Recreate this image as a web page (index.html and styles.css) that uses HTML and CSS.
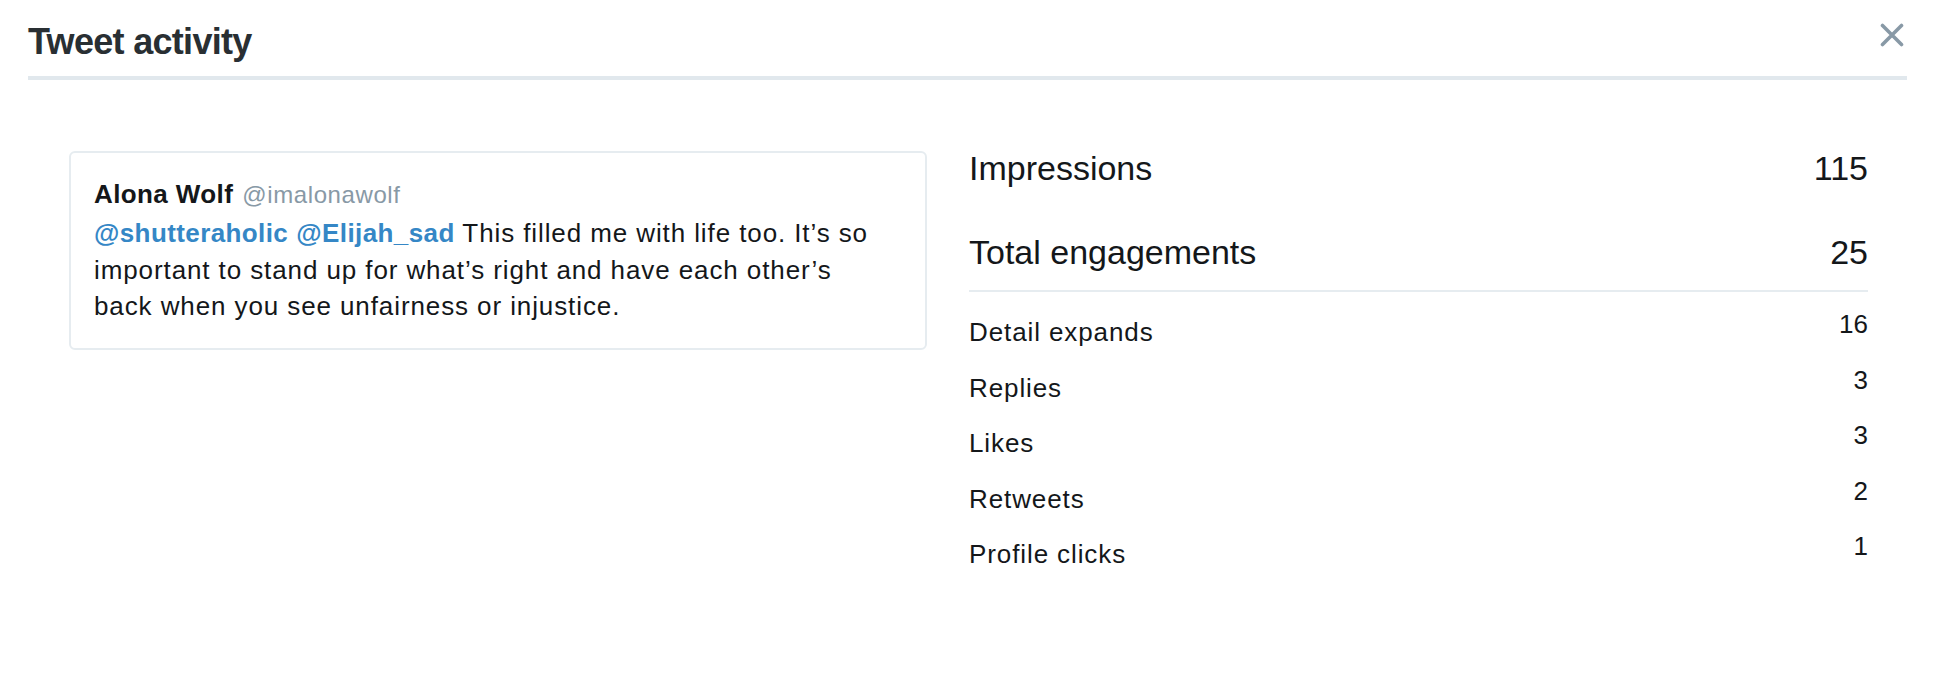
FILE: index.html
```html
<!DOCTYPE html>
<html lang="en">
<head>
<meta charset="utf-8">
<title>Tweet activity</title>
<link rel="stylesheet" href="styles.css">
</head>
<body>
<header class="header">
  <h1 class="title">Tweet activity</h1>
  <button class="close" aria-label="Close">
    <svg width="24" height="24" viewBox="0 0 24 24"><path d="M2.5 2.5 L21.5 21.5 M21.5 2.5 L2.5 21.5" stroke="#8899a6" stroke-width="3.6" stroke-linecap="round" fill="none"/></svg>
  </button>
</header>
<main class="main">
  <article class="card">
    <div class="author"><span class="name">Alona Wolf</span><span class="handle">@imalonawolf</span></div>
    <p class="text"><span class="mention">@shutteraholic</span> <span class="mention">@Elijah_sad</span> This filled me with life too. It’s so important to stand up for what’s right and have each other’s back when you see unfairness or injustice.</p>
  </article>
  <section class="stats">
    <div class="big-row"><span>Impressions</span><span>115</span></div>
    <div class="big-row"><span>Total engagements</span><span>25</span></div>
    <div class="sep"></div>
    <div class="row"><span class="label">Detail expands</span><span class="num">16</span></div>
    <div class="row"><span class="label">Replies</span><span class="num">3</span></div>
    <div class="row"><span class="label">Likes</span><span class="num">3</span></div>
    <div class="row"><span class="label">Retweets</span><span class="num">2</span></div>
    <div class="row"><span class="label">Profile clicks</span><span class="num">1</span></div>
  </section>
</main>
</body>
</html>
```
FILE: styles.css
```css
* { box-sizing: border-box; }
html, body { margin: 0; padding: 0; background: #fff; }
body {
  width: 1933px;
  height: 688px;
  overflow: hidden;
  font-family: "Liberation Sans", Arial, sans-serif;
  color: #14171a;
}
.header {
  display: flex;
  justify-content: space-between;
  align-items: flex-start;
  margin: 0 26px 0 28px;
  padding: 21px 3px 13px 0;
  border-bottom: 4px solid #e1e8ed;
}
.title {
  margin: 0;
  font-size: 36px;
  line-height: 42px;
  font-weight: 700;
  letter-spacing: -0.7px;
  color: #292f33;
}
.close {
  margin: 2px 0 0 0;
  padding: 0;
  border: 0;
  background: none;
  width: 24px;
  height: 24px;
  display: block;
}
.close svg { display: block; }
.main {
  display: flex;
  align-items: flex-start;
  padding: 66px 65px 0 69px;
}
.card {
  width: 858px;
  flex: none;
  margin-top: 5px;
  border: 2px solid #e6ecf0;
  border-radius: 6px;
  padding: 26px 40px 23px 23px;
}
.author {
  display: flex;
  align-items: baseline;
  gap: 9px;
  font-size: 26px;
  line-height: 30px;
  margin-bottom: 6px;
}
.name {
  font-weight: 700;
  letter-spacing: 0.4px;
  color: #14171a;
}
.handle {
  font-size: 24px;
  line-height: 28px;
  letter-spacing: 0.6px;
  color: #8899a6;
}
.text {
  margin: 0;
  font-size: 26px;
  line-height: 36.5px;
  letter-spacing: 0.9px;
  color: #14171a;
}
.mention {
  color: #3587c6;
  font-weight: 700;
  letter-spacing: 0.4px;
}
.stats {
  flex: 1;
  margin-left: 42px;
  display: flex;
  flex-direction: column;
}
.big-row {
  display: flex;
  justify-content: space-between;
  font-size: 34px;
  line-height: 44px;
  color: #14171a;
  margin-bottom: 40px;
}
.big-row:nth-of-type(2) { margin-bottom: 16px; }
.sep {
  height: 2px;
  background: #e6ecf0;
  margin-bottom: 22px;
}
.row {
  display: flex;
  justify-content: space-between;
  align-items: flex-start;
  font-size: 26px;
  line-height: 36px;
  letter-spacing: 0.9px;
  margin-bottom: 19.5px;
}
.num {
  margin-top: -8px;
  letter-spacing: 0;
}
```
